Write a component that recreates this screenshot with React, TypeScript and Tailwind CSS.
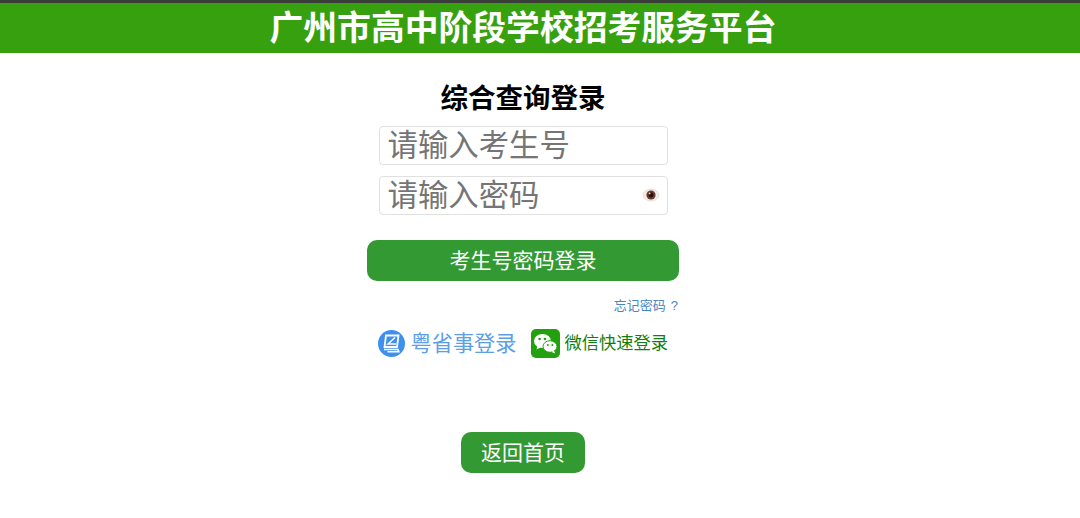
const cjk = "font-['Liberation_Sans','Noto_Sans_CJK_SC',sans-serif]";

function Eye() {
  return (
    <svg width="18" height="14" viewBox="0 0 18 14" className="absolute right-[7px] top-[11px]">
      <ellipse cx="9" cy="7" rx="8" ry="6" fill="#f1ece8" stroke="#d9d4d0" strokeWidth="0.6" />
      <circle cx="9" cy="7" r="4.6" fill="#6b3a2a" />
      <circle cx="9" cy="7" r="2.4" fill="#20100c" />
      <circle cx="7.6" cy="5.4" r="0.9" fill="#e8d8d0" />
    </svg>
  );
}

function YueIcon() {
  return (
    <svg width="27" height="27" viewBox="0 0 27 27" className="shrink-0">
      <circle cx="13.5" cy="13.5" r="13.5" fill="#3f90ec" />
      <path d="M8 5.5h12.5l-1.5 11.5H6.5z" fill="none" stroke="#fff" strokeWidth="1.8" />
      <path d="M17 7.5l-7 6.5h8" fill="none" stroke="#fff" strokeWidth="1.5" />
      <path d="M6 19.5h14l.8 2.2H9.5" fill="none" stroke="#fff" strokeWidth="1.6" />
    </svg>
  );
}

function WechatIcon() {
  return (
    <svg width="29" height="29" viewBox="0 0 29 29" className="shrink-0">
      <rect width="29" height="29" rx="5" fill="#22a00f" />
      <ellipse cx="11.5" cy="12" rx="8.5" ry="7" fill="#fff" />
      <path d="M6.5 16.5l-1 4 4-2z" fill="#fff" />
      <ellipse cx="19" cy="17.5" rx="7" ry="5.8" fill="#fff" stroke="#22a00f" strokeWidth="1" />
      <path d="M23 21.5l1.2 3-3.6-1.6z" fill="#fff" />
      <circle cx="8.6" cy="10" r="1.3" fill="#22a00f" />
      <circle cx="14" cy="10" r="1.3" fill="#22a00f" />
      <circle cx="16.8" cy="16" r="1" fill="#22a00f" />
      <circle cx="21.4" cy="16" r="1" fill="#22a00f" />
    </svg>
  );
}

export default function App() {
  return (
    <div className={`${cjk} h-[518px] w-[1080px] overflow-hidden bg-white`}>
      <div className="w-[1046px]">
        <header className="h-[53px] w-[1080px] border-t-[3px] border-[#3a3f3a] bg-[#37a00f]">
          <h1 className="w-[1046px] whitespace-nowrap text-center text-[33.8px] font-bold leading-[50px] text-white">
            广州市高中阶段学校招考服务平台
          </h1>
        </header>
        <main className="flex flex-col items-center">
          <h2 className="mt-[28px] whitespace-nowrap text-[27.5px] font-bold leading-[36px] text-black">综合查询登录</h2>
          <div className="mt-[9px] h-[39px] w-[289px] whitespace-nowrap rounded-[4px] border border-[#e0e0e0] bg-white pl-[8px] text-[30.4px] leading-[36px] text-[#757575]">
            请输入考生号
          </div>
          <div className="relative mt-[11px] h-[39px] w-[289px] whitespace-nowrap rounded-[4px] border border-[#e0e0e0] bg-white pl-[8px] text-[30.4px] leading-[36px] text-[#757575]">
            请输入密码
            <Eye />
          </div>
          <button className="mt-[25px] h-[41px] w-[312px] whitespace-nowrap rounded-[10px] bg-[#339933] text-[21px] leading-[40px] text-white">
            考生号密码登录
          </button>
          <div className="mt-[15px] flex w-[312px] justify-end whitespace-nowrap pr-[1px] text-[13px] leading-[20px] text-[#4a86c0]">
            <span>忘记密码</span>
            <span className="ml-[5px]">?</span>
          </div>
          <div className="mt-[13px] flex h-[29px] w-[291px] items-center whitespace-nowrap">
            <YueIcon />
            <span className="ml-[6px] text-[21.2px] leading-[29px] text-[#5c9ee8]">粤省事登录</span>
            <span className="ml-[15px] flex items-center">
              <WechatIcon />
              <span className="ml-[4px] text-[17.3px] leading-[29px] text-[#0f7f0f]">微信快速登录</span>
            </span>
          </div>
          <button className="mt-[74px] h-[41px] w-[124px] whitespace-nowrap rounded-[10px] bg-[#339933] text-[21px] leading-[40px] text-white">
            返回首页
          </button>
        </main>
      </div>
    </div>
  );
}
